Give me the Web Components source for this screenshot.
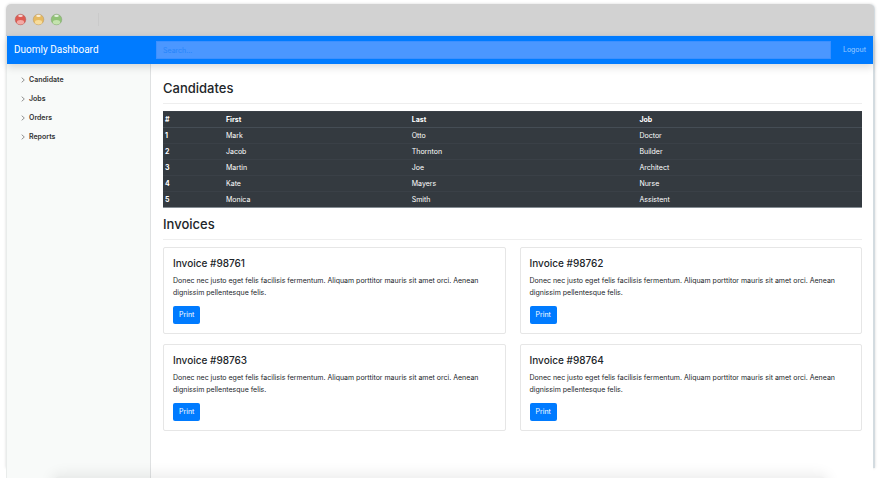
<!DOCTYPE html>
<html lang="en">
<head>
<meta charset="utf-8">
<meta name="viewport" content="width=device-width, initial-scale=1">
<title>Duomly Dashboard</title>
<style>
    body {
        margin: 0;
        background: #fff;
        color: #212529;
        font: 7px/12px Inter, "Liberation Sans", sans-serif;
    }
</style>
</head>
<body>
<browser-window>
    <dashboard-navbar slot="top" brand="Duomly Dashboard"></dashboard-navbar>
    <dashboard-sidebar items="Candidate,Jobs,Orders,Reports"></dashboard-sidebar>
    <main>
        <dashboard-section heading="Candidates">
            <candidates-table></candidates-table>
        </dashboard-section>
        <dashboard-section heading="Invoices">
            <invoice-list>
                <invoice-card number="98761">Donec nec justo eget felis facilisis fermentum. Aliquam porttitor mauris sit amet orci. Aenean dignissim pellentesque felis.</invoice-card>
                <invoice-card number="98762">Donec nec justo eget felis facilisis fermentum. Aliquam porttitor mauris sit amet orci. Aenean dignissim pellentesque felis.</invoice-card>
                <invoice-card number="98763">Donec nec justo eget felis facilisis fermentum. Aliquam porttitor mauris sit amet orci. Aenean dignissim pellentesque felis.</invoice-card>
                <invoice-card number="98764">Donec nec justo eget felis facilisis fermentum. Aliquam porttitor mauris sit amet orci. Aenean dignissim pellentesque felis.</invoice-card>
            </invoice-list>
        </dashboard-section>
    </main>
</browser-window>

<script>
class BrowserWindow extends HTMLElement {
    connectedCallback() {
        this.attachShadow({ mode: 'open' });
        this.shadowRoot.innerHTML = `
            <style>
                :host {
                    display: flex;
                    flex-direction: column;
                    box-sizing: border-box;
                    min-height: 100vh;
                    padding: 4px 6px 0;
                    position: relative;
                    overflow: hidden;
                }
                .edge {
                    position: absolute;
                    inset: 4px 5px 10px 6px;
                    border-radius: 5px 5px 0 0;
                    border-right: 2px solid #d3dbe0;
                    box-shadow: 0 0 3px rgba(0, 0, 0, 0.16);
                }
                .titlebar {
                    display: flex;
                    align-items: center;
                    gap: 5px;
                    height: 31px;
                    padding: 0 8px;
                    position: relative;
                    background: #d2d2d2;
                    border-bottom: 1px solid #c3cedb;
                    border-radius: 5px 5px 0 0;
                }
                svg {
                    width: 13px;
                    height: 13px;
                }
                .divider {
                    width: 1px;
                    height: 13px;
                    margin-left: 30px;
                    background: #cacaca;
                }
                .page {
                    flex: 1;
                    display: flex;
                    flex-direction: column;
                    position: relative;
                    margin-right: 1px;
                    background: #fff;
                    border-left: 1px solid #e9eceb;
                }
                .columns {
                    flex: 1;
                    display: flex;
                }
                ::slotted(main) {
                    flex: 1;
                    min-width: 0;
                    padding: 12px 11px 12px 12px;
                }
                .haze {
                    position: absolute;
                    left: 6%;
                    right: 6%;
                    bottom: -12px;
                    height: 14px;
                    border-radius: 50px;
                    background: rgba(0, 0, 0, 0.05);
                    box-shadow: 0 0 14px 2px rgba(0, 0, 0, 0.08);
                    pointer-events: none;
                }
            </style>
            <div class="edge"></div>
            <div class="titlebar">
                ${this.light('#dd5b52', '#f3aaa5', '#a44d49')}
                ${this.light('#e6ba61', '#f7dc9b', '#ad8a55')}
                ${this.light('#91c277', '#c4e3ae', '#769b65')}
                <span class="divider"></span>
            </div>
            <div class="page">
                <slot name="top"></slot>
                <div class="columns"><slot></slot></div>
            </div>
            <div class="haze"></div>
        `;
    }

    light(base, glow, rim) {
        return `
            <svg viewBox="0 0 13 13" aria-hidden="true">
                <circle cx="6.5" cy="6.5" r="5.3" fill="${base}" stroke="${rim}" stroke-opacity=".6" stroke-width=".7"/>
                <ellipse cx="6.5" cy="9.3" rx="3.6" ry="2.2" fill="${glow}"/>
                <ellipse cx="6.5" cy="2.9" rx="2.3" ry="1.1" fill="#fff" fill-opacity=".75"/>
            </svg>`;
    }
}

class DashboardNavbar extends HTMLElement {
    connectedCallback() {
        this.attachShadow({ mode: 'open' });
        this.shadowRoot.innerHTML = `
            <style>
                :host {
                    display: block;
                    position: relative;
                    z-index: 1;
                    background: #007bff;
                    box-shadow: 0 3px 8px rgba(0, 0, 0, 0.15);
                }
                nav {
                    display: flex;
                    align-items: center;
                    height: 28px;
                    padding: 0 7px;
                }
                a {
                    color: rgba(255, 255, 255, 0.6);
                    text-decoration: none;
                }
                .brand {
                    width: 142px;
                    color: #fff;
                    font-family: Roboto, sans-serif;
                    font-size: 10px;
                }
                input {
                    flex: 1;
                    min-width: 0;
                    box-sizing: border-box;
                    height: 18px;
                    margin: 0 12px 0 0;
                    padding: 0 6px;
                    color: #fff;
                    font: inherit;
                    background: #4b97ff;
                    border: 1px solid #3d90ff;
                    border-radius: 0;
                    outline: none;
                }
                input::placeholder {
                    color: #2585fb;
                    opacity: 1;
                }
            </style>
            <nav>
                <a class="brand" href="#">${this.getAttribute('brand')}</a>
                <input type="text" placeholder="Search..." aria-label="Search">
                <a href="#">Logout</a>
            </nav>
        `;
    }
}

class DashboardSidebar extends HTMLElement {
    connectedCallback() {
        const items = this.getAttribute('items').split(',');
        this.attachShadow({ mode: 'open' });
        this.shadowRoot.innerHTML = `
            <style>
                :host {
                    display: block;
                    flex: 0 0 143px;
                    background: #f8faf9;
                    border-right: 1px solid #dfe1e2;
                }
                ul {
                    display: grid;
                    gap: 7px;
                    margin: 0;
                    padding: 10px 14px;
                    list-style: none;
                }
                a {
                    display: flex;
                    align-items: center;
                    gap: 4px;
                    color: #333;
                    font-weight: 600;
                    text-decoration: none;
                }
                svg {
                    width: 4px;
                    height: 6px;
                }
            </style>
            <ul>
                ${items.map(item => `
                    <li><a href="#">
                        <svg viewBox="0 0 4 6" fill="none" stroke="#777" stroke-width=".8" aria-hidden="true"><path d="M.7.7 3.3 3 .7 5.3"/></svg>
                        ${item}
                    </a></li>`).join('')}
            </ul>
        `;
    }
}

class DashboardSection extends HTMLElement {
    connectedCallback() {
        this.attachShadow({ mode: 'open' });
        this.shadowRoot.innerHTML = `
            <style>
                :host {
                    display: block;
                }
                h2 {
                    margin: 0 0 7px;
                    padding: 4px 0 7px;
                    border-bottom: 1px solid #eee;
                    font-size: 13px;
                    font-weight: 500;
                    line-height: 16px;
                }
            </style>
            <h2>${this.getAttribute('heading')}</h2>
            <slot></slot>
        `;
    }
}

class CandidatesTable extends HTMLElement {
    connectedCallback() {
        const rows = [
            ['Mark', 'Otto', 'Doctor'],
            ['Jacob', 'Thornton', 'Builder'],
            ['Martin', 'Joe', 'Architect'],
            ['Kate', 'Mayers', 'Nurse'],
            ['Monica', 'Smith', 'Assistent']
        ];
        this.attachShadow({ mode: 'open' });
        this.shadowRoot.innerHTML = `
            <style>
                :host {
                    display: block;
                    margin-bottom: 4px;
                }
                table {
                    width: 100%;
                    table-layout: fixed;
                    border-collapse: collapse;
                    color: #fff;
                    background: #343a40;
                    border-top: 1px solid #6d7479;
                    border-bottom: 1px solid #858d94;
                }
                th, td {
                    padding: 2px 2px 1px;
                    text-align: left;
                    border-top: 1px solid #3a4047;
                }
                thead th {
                    border-bottom: 1px solid #454d55;
                }
                .id {
                    width: 57px;
                }
                .first {
                    width: 26%;
                }
                .last {
                    width: 32%;
                }
            </style>
            <table>
                <thead>
                    <tr>
                        <th class="id" scope="col">#</th>
                        <th class="first" scope="col">First</th>
                        <th class="last" scope="col">Last</th>
                        <th scope="col">Job</th>
                    </tr>
                </thead>
                <tbody>
                    ${rows.map((row, i) => `
                        <tr>
                            <th scope="row">${i + 1}</th>
                            ${row.map(cell => `<td>${cell}</td>`).join('')}
                        </tr>`).join('')}
                </tbody>
            </table>
        `;
    }
}

class InvoiceList extends HTMLElement {
    connectedCallback() {
        this.attachShadow({ mode: 'open' });
        this.shadowRoot.innerHTML = `
            <style>
                :host {
                    display: grid;
                    grid-template-columns: 1fr 1fr;
                    gap: 10px 14px;
                }
            </style>
            <slot></slot>
        `;
    }
}

class InvoiceCard extends HTMLElement {
    connectedCallback() {
        this.attachShadow({ mode: 'open' });
        this.shadowRoot.innerHTML = `
            <style>
                :host {
                    display: block;
                    padding: 9px;
                    border: 1px solid #e6e6e6;
                    border-radius: 2px;
                }
                h3 {
                    margin: 0 0 6px;
                    font-size: 10px;
                    font-weight: 500;
                    line-height: 12px;
                }
                p {
                    margin: 0 0 7px;
                }
                button {
                    display: block;
                    height: 18px;
                    padding: 0 6px;
                    color: #fff;
                    font: inherit;
                    background: #007bff;
                    border: 0;
                    border-radius: 2px;
                }
            </style>
            <h3>Invoice #${this.getAttribute('number')}</h3>
            <p><slot></slot></p>
            <button type="button">Print</button>
        `;
    }
}

customElements.define('browser-window', BrowserWindow);
customElements.define('dashboard-navbar', DashboardNavbar);
customElements.define('dashboard-sidebar', DashboardSidebar);
customElements.define('dashboard-section', DashboardSection);
customElements.define('candidates-table', CandidatesTable);
customElements.define('invoice-list', InvoiceList);
customElements.define('invoice-card', InvoiceCard);
</script>
</body>
</html>
